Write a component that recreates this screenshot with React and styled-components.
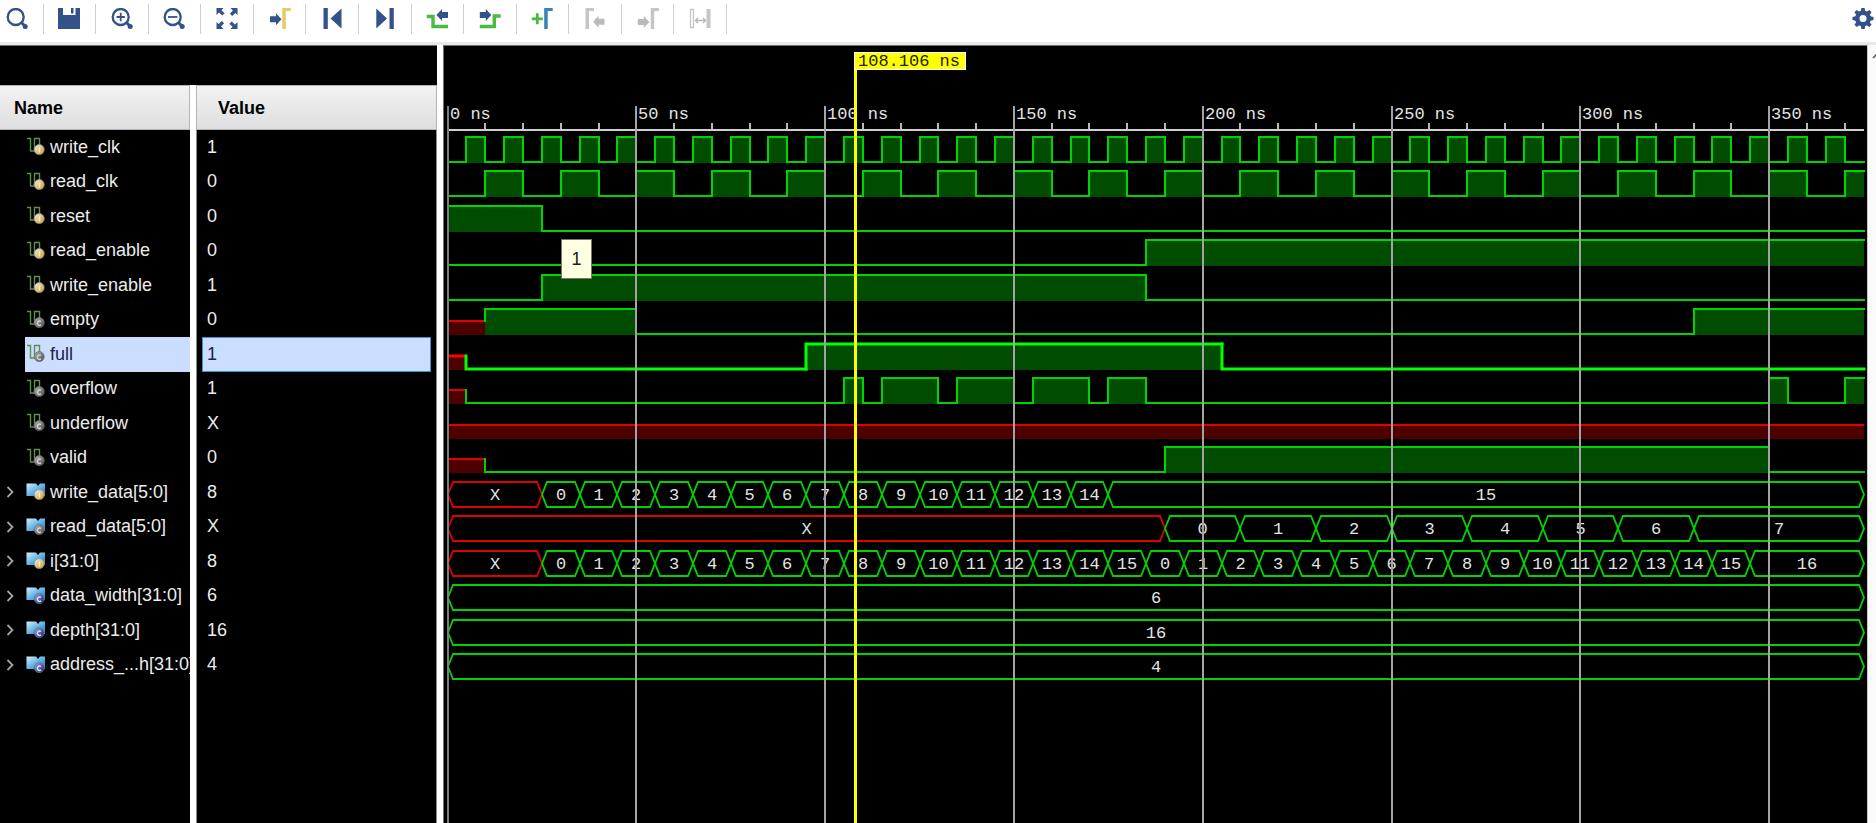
import React, { useLayoutEffect, useRef, useState } from "react";
import styled, { createGlobalStyle } from "styled-components";

const GlobalStyle = createGlobalStyle`
  * { box-sizing: border-box; }
  body {
    margin: 0;
    background: #fff;
    font-family: "Liberation Sans", Arial, sans-serif;
    font-size: 18px;
  }
`;

/* ---------- data ---------- */

const END = 375;
const CURSOR = 108.106;
const SELECTED = "full";
const ROWS_HEIGHT = 552;
const RULER_Y = 85;
const WAVE_LEFT = 4;
const WAVE_RIGHT = 4;

const clock = (half) => {
  const segments = [];
  for (let t = 0, level = 0; t < END; t += half, level = 1 - level) {
    segments.push([t, level]);
  }
  return segments;
};

const count = (start, step, from, to) =>
  Array.from({ length: to - from + 1 }, (_, k) => [start + k * step, String(from + k)]);

const SIGNALS = [
  { name: "write_clk", value: "1", kind: "reg", bits: clock(5) },
  { name: "read_clk", value: "0", kind: "reg", bits: clock(10) },
  { name: "reset", value: "0", kind: "reg", bits: [[0, 1], [25, 0]] },
  { name: "read_enable", value: "0", kind: "reg", bits: [[0, 0], [185, 1]] },
  { name: "write_enable", value: "1", kind: "reg", bits: [[0, 0], [25, 1], [185, 0]] },
  { name: "empty", value: "0", kind: "wire", bits: [[0, "x"], [10, 1], [50, 0], [330, 1]] },
  { name: "full", value: "1", kind: "wire", bits: [[0, "x"], [5, 0], [95, 1], [205, 0]] },
  {
    name: "overflow",
    value: "1",
    kind: "wire",
    bits: [
      [0, "x"], [5, 0], [105, 1], [110, 0], [115, 1], [130, 0], [135, 1], [150, 0],
      [155, 1], [170, 0], [175, 1], [185, 0], [350, 1], [355, 0], [370, 1],
    ],
  },
  { name: "underflow", value: "X", kind: "wire", bits: [[0, "x"]] },
  { name: "valid", value: "0", kind: "wire", bits: [[0, "x"], [10, 0], [190, 1], [350, 0]] },
  { name: "write_data[5:0]", value: "8", kind: "reg", bus: [[0, "X"], ...count(25, 10, 0, 15)] },
  { name: "read_data[5:0]", value: "X", kind: "wire", bus: [[0, "X"], ...count(190, 20, 0, 7)] },
  {
    name: "i[31:0]",
    value: "8",
    kind: "reg",
    bus: [[0, "X"], ...count(25, 10, 0, 15), ...count(185, 10, 0, 16)],
  },
  { name: "data_width[31:0]", value: "6", kind: "const", bus: [[0, "6"]] },
  { name: "depth[31:0]", value: "16", kind: "const", bus: [[0, "16"]] },
  { name: "address_...h[31:0]", value: "4", kind: "const", bus: [[0, "4"]] },
];

/* ---------- styled parts ---------- */

const Page = styled.div`
  display: flex;
  flex-direction: column;
  min-height: 100vh;
  overflow: hidden;
`;

const Toolbar = styled.header`
  display: flex;
  justify-content: space-between;
  height: 45px;
  padding-top: 4px;
  border-bottom: 3px solid #e8e8e8;
`;

const ToolGroup = styled.div`
  display: grid;
  grid-template-columns: repeat(14, 1fr);
  width: 736px;
  height: 30px;
  margin-left: -9px;
`;

const ToolButton = styled.button`
  display: flex;
  align-items: center;
  justify-content: center;
  height: 30px;
  padding: 0;
  border: 0;
  border-right: 1px solid #cfcfcf;
  background: none;
  svg { width: 22px; height: 22px; flex: none; }
`;

const SettingsButton = styled(ToolButton)`
  width: 27px;
  border: 0;
`;

const Workspace = styled.main`
  display: flex;
  flex: 1;
  background: #000;
`;

const SignalPane = styled.section`
  display: flex;
  flex-direction: column;
  width: 437px;
  flex: none;
  padding-top: 39px;
  border-top: 1px solid #707070;
`;

const SignalTable = styled.table`
  display: block;
`;

const TableHead = styled.thead`
  display: block;
`;

const TableBody = styled.tbody`
  display: grid;
  grid-template-rows: repeat(16, 1fr);
  height: ${ROWS_HEIGHT}px;
`;

const SplitRow = styled.tr`
  display: grid;
  grid-template-columns: 190px 1fr;
  column-gap: 6px;
  min-height: 0;
  background: #fff;
`;

const Filler = styled(SplitRow).attrs({ as: "div" })`
  flex: 1;
`;

const FillerCell = styled.div`
  background: #000;
  border: 0 solid #8c8c8c;
  border-width: ${(p) => (p.$value ? "0 1px" : "0")};
`;

const HeadCell = styled.th`
  height: 45px;
  padding: 0 ${(p) => (p.$value ? 21 : 14)}px;
  border: 1px solid #b4b4b4;
  border-left-width: ${(p) => (p.$value ? 1 : 0)}px;
  background: linear-gradient(#f3f3f3, #dedee0);
  font-weight: bold;
  line-height: 44px;
  text-align: left;
`;

const NameCell = styled.td`
  display: flex;
  align-items: stretch;
  min-width: 0;
  padding: 0;
  overflow: hidden;
  background: #000;
`;

const ExpandSlot = styled.span`
  display: flex;
  flex: none;
  width: 25px;
`;

const ExpandButton = styled.button`
  display: flex;
  align-items: center;
  width: 25px;
  padding: 0 0 0 6px;
  border: 0;
  background: none;
  svg { width: 8px; height: 12px; }
`;

const SignalLabel = styled.span`
  display: flex;
  flex: 1;
  align-items: center;
  gap: 5px;
  padding-left: 1px;
  background: ${(p) => (p.$selected ? "#cbdeff" : "transparent")};
  color: ${(p) => (p.$selected ? "#1c1c4a" : "#ececec")};
  white-space: nowrap;
  svg { width: 19px; height: 20px; flex: none; }
`;

const ValueCell = styled.td`
  display: flex;
  align-items: stretch;
  padding: 0 5px;
  border: 0 solid #8c8c8c;
  border-width: 0 1px;
  background: #000;
`;

const ValueText = styled.span`
  display: flex;
  flex: 1;
  align-items: center;
  padding-left: 4px;
  border: 1px solid ${(p) => (p.$selected ? "#3a92cf" : "transparent")};
  background: ${(p) => (p.$selected ? "#cbdeff" : "transparent")};
  color: ${(p) => (p.$selected ? "#1c1c4a" : "#ececec")};
`;

const Splitter = styled.div`
  flex: none;
  width: 6px;
  background: #fff;
`;

const WavePane = styled.section`
  position: relative;
  display: flex;
  flex: 1;
  min-width: 0;
  min-height: 660px;
`;

const WaveSvg = styled.svg`
  display: block;
  flex: 1;
  min-width: 0;
  border-left: 1px solid #707070;
  border-top: 1px solid #707070;
  text {
    font-family: "Liberation Mono", "Courier New", monospace;
    font-size: 17px;
    fill: #e4e4e4;
  }
`;

const Tooltip = styled.div`
  position: absolute;
  left: 118px;
  top: 194px;
  width: 31px;
  height: 40px;
  border: 1px solid #77776a;
  background: #ffffe1;
  color: #1c1c1c;
  line-height: 39px;
  text-align: center;
`;

const ScrollTrack = styled.aside`
  display: flex;
  flex: none;
  width: 9px;
  overflow: hidden;
  border-left: 1px solid #c8c8c8;
  background: #fafafa;
`;

const ScrollButton = styled.button`
  flex: none;
  width: 16px;
  height: 20px;
  padding: 0 0 0 4px;
  border: 0;
  background: none;
  svg { display: block; width: 12px; height: 8px; }
`;

/* ---------- toolbar icons ---------- */

const NAVY = "#34528a";
const GREEN = "#48bb42";
const GREY = "#bababa";

const Icon = ({ children }) => (
  <svg viewBox="0 0 22 22" aria-hidden="true">{children}</svg>
);

const Lens = ({ children }) => (
  <Icon>
    <circle cx="9.7" cy="9" r="8" fill="none" stroke={NAVY} strokeWidth="2.3" />
    <path d="M15.5 14.5 L18.8 18" stroke={NAVY} strokeWidth="3" />
    <circle cx="19.2" cy="18.4" r="2.5" fill={NAVY} />
    {children}
  </Icon>
);

const ArrowRight = ({ x, y, fill = NAVY }) => (
  <path d={`M${x} ${y - 3} h6 v-3 l5.5 6 l-5.5 6 v-3 h-6 z`} fill={fill} />
);

const ArrowLeft = ({ x, y, fill = NAVY }) => (
  <path d={`M${x} ${y - 3} h-6 v-3 l-5.5 6 l5.5 6 v-3 h6 z`} fill={fill} />
);

const Flag = ({ x, fill }) => <path d={`M${x} 0 h8.5 v3 h-5 v18 h-3.5 z`} fill={fill} />;

const FitIcon = () => (
  <Icon>
    {[0, 90, 180, 270].map((angle) => (
      <path
        key={angle}
        transform={`rotate(${angle} 11 10.5)`}
        d="M0.5 0 H7.6 L5.4 2.2 L8.6 5.3 L6.3 7.6 L3 4.6 L0.5 7.1 Z"
        fill={NAVY}
      />
    ))}
  </Icon>
);

const GearIcon = () => (
  <Icon>
    <circle cx="11" cy="10.5" r="5.7" fill="none" stroke={NAVY} strokeWidth="4.4" />
    {[0, 45, 90, 135, 180, 225, 270, 315].map((angle) => (
      <path
        key={angle}
        transform={`rotate(${angle} 11 10.5)`}
        d="M8.6 4 L9.4 0 H12.6 L13.4 4 Z"
        fill={NAVY}
      />
    ))}
  </Icon>
);

const TOOLS = [
  ["Search", <Lens />],
  [
    "Save",
    <Icon>
      <path d="M0 0 H5 V7 H17.5 V0 H22 V21 H0 Z" fill={NAVY} />
      <path d="M13 0 H15.5 V5.5 H13 Z" fill={NAVY} />
    </Icon>,
  ],
  ["Zoom in", <Lens><path d="M5.5 9 h8.4 M9.7 4.8 v8.4" stroke={NAVY} strokeWidth="1.8" /></Lens>],
  ["Zoom out", <Lens><path d="M5 9 h9.4" stroke={NAVY} strokeWidth="1.8" /></Lens>],
  ["Zoom fit", <FitIcon />],
  ["Go to cursor", <Icon><ArrowRight x={1} y={11.3} /><Flag x={13.3} fill="#e6cb66" /></Icon>],
  ["Go to start", <Icon><path d="M2.5 0 h4.3 v21 h-4.3 z M20.5 0.5 v20 L9.5 10.5 z" fill={NAVY} /></Icon>],
  ["Go to end", <Icon><path d="M15.5 0 h4.3 v21 h-4.3 z M2.3 0.5 v20 L13 10.5 z" fill={NAVY} /></Icon>],
  [
    "Previous transition",
    <Icon>
      <path d="M0.8 8.5 H7 V18.5 H22" fill="none" stroke={GREEN} strokeWidth="3.4" />
      <ArrowLeft x={22} y={7} />
    </Icon>,
  ],
  [
    "Next transition",
    <Icon>
      <path d="M0.8 18.5 H15.3 V8 H21.8" fill="none" stroke={GREEN} strokeWidth="3.4" />
      <ArrowRight x={0.8} y={7} />
    </Icon>,
  ],
  [
    "Add marker",
    <Icon>
      <path d="M0.8 10.8 h11 M6.3 5.3 v11" stroke={GREEN} strokeWidth="2.8" />
      <Flag x={13.2} fill="#3583b8" />
    </Icon>,
  ],
  ["Previous marker", <Icon><Flag x={1.5} fill="#c6c6c6" /><ArrowLeft x={20.5} y={13.7} fill={GREY} /></Icon>],
  ["Next marker", <Icon><ArrowRight x={0.8} y={14} fill={GREY} /><Flag x={13.7} fill="#c6c6c6" /></Icon>],
  [
    "Swap cursors",
    <Icon>
      <path d="M1.5 1.5 h3 v18 h-3 z" fill="none" stroke="#c6c6c6" strokeWidth="1.3" />
      <path d="M17.5 1 h4 v19 h-4 z" fill="#c6c6c6" />
      <path d="M6.5 12.5 h10 M9 10 L6.5 12.5 L9 15 M14 10 L16.5 12.5 L14 15" fill="none" stroke={GREY} strokeWidth="1.5" />
    </Icon>,
  ],
];

/* ---------- signal icons ---------- */

const BADGES = {
  reg: { fill: "url(#badge-reg)", ring: "#8e8e8e", mark: "M13.5 10.5 v5", ink: "#fff3c4" },
  wire: { fill: "url(#badge-wire)", ring: "#6c6c6c", mark: "M15 11.5 a2.2 2.2 0 1 0 0 3.4", ink: "#d4d4d4" },
  const: { fill: "url(#badge-const)", ring: "#63718f", mark: "M15 11.5 a2.2 2.2 0 1 0 0 3.4", ink: "#dfe6ff" },
};

const IconDefs = () => (
  <svg width="0" height="0" style={{ position: "absolute" }} aria-hidden="true">
    <defs>
      <linearGradient id="badge-reg" x1="0" y1="0" x2="1" y2="1">
        <stop offset="0" stopColor="#f2f2f2" />
        <stop offset="0.5" stopColor="#dcc489" />
        <stop offset="1" stopColor="#e89c00" />
      </linearGradient>
      <linearGradient id="badge-wire" x1="0" y1="0" x2="1" y2="1">
        <stop offset="0" stopColor="#b4b4b4" />
        <stop offset="1" stopColor="#4c4c4c" />
      </linearGradient>
      <linearGradient id="badge-const" x1="0" y1="0" x2="1" y2="1">
        <stop offset="0" stopColor="#9fb0d8" />
        <stop offset="1" stopColor="#0f1c7c" />
      </linearGradient>
      <linearGradient id="bus-fill" x1="0" y1="0" x2="1" y2="1">
        <stop offset="0" stopColor="#d5effb" />
        <stop offset="0.7" stopColor="#3a9fe0" />
        <stop offset="1" stopColor="#2a86cc" />
      </linearGradient>
    </defs>
  </svg>
);

const SignalIcon = ({ kind, bus }) => {
  const badge = BADGES[kind];
  return (
    <svg viewBox="0 0 19 20" aria-hidden="true">
      {bus ? (
        <path d="M0.5 1.5 H10 L12 4 L14 1.5 H19 V14 H12 L10 12.5 L8 14 H0.5 Z" fill="url(#bus-fill)" />
      ) : (
        <path d="M1 1.5 H4.5 V14 H8.5 V1.5 H13.5 V9" fill="none" stroke="#5c904c" strokeWidth="1.4" />
      )}
      <circle cx="13.2" cy="12.6" r="5" fill={badge.fill} stroke={badge.ring} strokeWidth="0.8" />
      <path d={badge.mark} fill="none" stroke={badge.ink} strokeWidth="1.4" />
    </svg>
  );
};

/* ---------- waveforms ---------- */

const LEVEL_Y = { 1: 7, 0: 32, x: 19 };
const LOW = 32;

const COLORS = {
  green: { line: "#00d400", fill: "#004c00" },
  red: { line: "#e00000", fill: "#4c0000" },
};

function BitTrace({ bits, top, toX, selected }) {
  const line = (level) => {
    if (selected) return level === "x" ? "#ff0000" : "#00ff00";
    return COLORS[level === "x" ? "red" : "green"].line;
  };
  const segments = bits.map(([start, level], k) => ({
    x0: toX(start),
    x1: toX(k + 1 < bits.length ? bits[k + 1][0] : END),
    y: top + LEVEL_Y[level],
    from: top + LEVEL_Y[k > 0 ? bits[k - 1][1] : level],
    level,
  }));
  return (
    <g>
      {segments.map((s) =>
        s.level === 0 ? null : (
          <rect
            key={s.x0}
            x={s.x0}
            y={s.y}
            width={s.x1 - s.x0}
            height={top + LOW + 1 - s.y}
            fill={COLORS[s.level === "x" ? "red" : "green"].fill}
          />
        )
      )}
      {segments.map((s) => (
        <path
          key={s.x0}
          d={`M${s.x0} ${s.from} V${s.y} H${s.x1}`}
          fill="none"
          stroke={line(s.level)}
          strokeWidth={selected ? 3 : 2}
          strokeLinecap={s.from === s.y ? "butt" : "square"}
        />
      ))}
    </g>
  );
}

function BusTrace({ bus, top, toX }) {
  const hi = top + 7;
  const lo = top + 32;
  const mid = (hi + lo) / 2;
  return (
    <g>
      {bus.map(([start, text], k) => {
        const x0 = toX(start);
        const x1 = toX(k + 1 < bus.length ? bus[k + 1][0] : END);
        const color = COLORS[text === "X" ? "red" : "green"].line;
        return (
          <g key={start}>
            <path
              d={`M${x0} ${mid} L${x0 + 5} ${hi} H${x1 - 5} L${x1} ${mid} L${x1 - 5} ${lo} H${x0 + 5} Z`}
              fill="none"
              stroke={color}
              strokeWidth="1.8"
            />
            <text x={(x0 + x1) / 2} y={top + 25} textAnchor="middle">{text}</text>
          </g>
        );
      })}
    </g>
  );
}

function Waveform() {
  const ref = useRef(null);
  const [width, setWidth] = useState(1424);

  useLayoutEffect(() => {
    const measure = () => setWidth(ref.current.getBoundingClientRect().width);
    measure();
    window.addEventListener("resize", measure);
    return () => window.removeEventListener("resize", measure);
  }, []);

  const scale = (width - WAVE_LEFT - WAVE_RIGHT) / END;
  const toX = (t) => Math.floor(WAVE_LEFT + t * scale);
  const rowTop = (k) => RULER_Y - 1 + Math.floor((k * ROWS_HEIGHT) / SIGNALS.length);
  const ticks = Array.from({ length: 38 }, (_, k) => k * 10);
  const majors = ticks.filter((t) => t % 50 === 0);
  const cursorX = toX(CURSOR);
  const right = toX(END);

  return (
    <WavePane ref={ref}>
      <WaveSvg role="img" aria-label="Signal waveforms">
        {SIGNALS.map((s, k) =>
          s.bits ? (
            <BitTrace key={s.name} bits={s.bits} top={rowTop(k)} toX={toX} selected={s.name === SELECTED} />
          ) : (
            <BusTrace key={s.name} bus={s.bus} top={rowTop(k)} toX={toX} />
          )
        )}
        <rect x={toX(0)} y={RULER_Y - 2} width={right - toX(0)} height="2" fill="#cfcfcf" />
        {ticks.map((t) => (
          <rect key={t} x={toX(t) - 1} y={RULER_Y - 8} width="2" height="6" fill="#b8b8b8" />
        ))}
        {majors.map((t) => (
          <g key={t}>
            <rect x={toX(t) - 1} y={RULER_Y - 25} width="2" height="100%" fill={t === 0 ? "#7c7c7c" : "#a4a4a4"} />
            <text x={toX(t) + 2} y={RULER_Y - 12}>{t} ns</text>
          </g>
        ))}
        <rect x={cursorX - 2} y="8" width="3" height="100%" fill="#ffff00" />
        <rect x={cursorX - 1.5} y="6.5" width="111" height="17" fill="#ffff00" stroke="#ffffff" />
        <text x={cursorX + 2} y="20" style={{ fill: "#222200" }}>108.106 ns</text>
      </WaveSvg>
      <Tooltip role="tooltip">1</Tooltip>
    </WavePane>
  );
}

/* ---------- page ---------- */

export default function App() {
  return (
    <Page>
      <GlobalStyle />
      <IconDefs />
      <Toolbar>
        <ToolGroup role="toolbar" aria-label="Waveform tools">
          {TOOLS.map(([label, icon]) => (
            <ToolButton key={label} type="button" aria-label={label}>{icon}</ToolButton>
          ))}
        </ToolGroup>
        <SettingsButton type="button" aria-label="Settings"><GearIcon /></SettingsButton>
      </Toolbar>
      <Workspace>
        <SignalPane>
          <SignalTable>
            <TableHead>
              <SplitRow>
                <HeadCell scope="col">Name</HeadCell>
                <HeadCell scope="col" $value>Value</HeadCell>
              </SplitRow>
            </TableHead>
            <TableBody>
              {SIGNALS.map((s) => {
                const selected = s.name === SELECTED;
                return (
                  <SplitRow key={s.name}>
                    <NameCell>
                      <ExpandSlot>
                        {s.bus && (
                          <ExpandButton type="button" aria-label={`Expand ${s.name}`}>
                            <svg viewBox="0 0 8 12" aria-hidden="true">
                              <path d="M1.5 1 L6.5 6 L1.5 11" fill="none" stroke="#a4a4a4" strokeWidth="1.8" />
                            </svg>
                          </ExpandButton>
                        )}
                      </ExpandSlot>
                      <SignalLabel $selected={selected}>
                        <SignalIcon kind={s.kind} bus={Boolean(s.bus)} />
                        {s.name}
                      </SignalLabel>
                    </NameCell>
                    <ValueCell>
                      <ValueText $selected={selected}>{s.value}</ValueText>
                    </ValueCell>
                  </SplitRow>
                );
              })}
            </TableBody>
          </SignalTable>
          <Filler>
            <FillerCell />
            <FillerCell $value />
          </Filler>
        </SignalPane>
        <Splitter />
        <Waveform />
        <ScrollTrack>
          <ScrollButton type="button" aria-label="Scroll up">
            <svg viewBox="0 0 12 8" aria-hidden="true">
              <path d="M1 7 L6 2 L11 7" fill="none" stroke="#606060" strokeWidth="1.6" />
            </svg>
          </ScrollButton>
        </ScrollTrack>
      </Workspace>
    </Page>
  );
}
